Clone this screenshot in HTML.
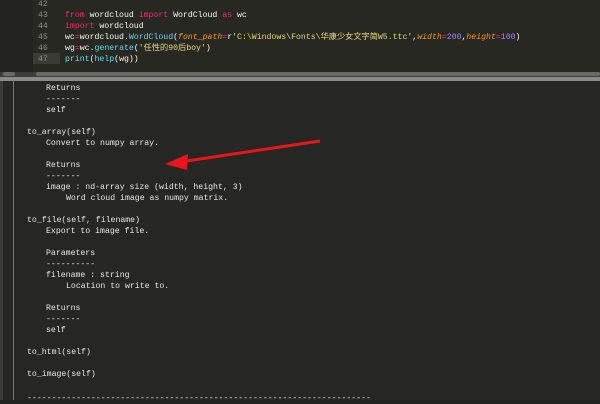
<!DOCTYPE html>
<html><head><meta charset="utf-8"><style>
body{margin:0;width:600px;height:400px;overflow:hidden;background:#232320;font-family:"Liberation Mono","Noto Sans CJK SC",monospace;font-size:8.2px;line-height:11px;position:relative}
.ed{position:absolute;left:0;top:0;width:600px;height:72px;background:#272822}
.gut{position:absolute;left:0;top:0;width:33px;height:72px;background:#22231f}
.ln{position:absolute;left:38px;color:#8f908a;width:20px;height:11px}
.cd{position:absolute;left:65px;color:#f8f8f2;white-space:pre;height:11px;line-height:11px}
.k{color:#f92672}.f{color:#66d9ef}.s{color:#e6db74}.a{color:#fd971f;font-style:italic}.n{color:#ae81ff}
.cd span{line-height:11px}
.out{position:absolute;left:0;top:81px;width:600px;height:319px;background:#262624}
.o{position:absolute;color:#e8e8e8;white-space:pre;height:11px}
</style></head><body>
<div class="ed"><div class="gut"></div>
<div style="position:absolute;left:33px;top:53px;width:27px;height:11px;background:#3a3b35"></div>
<div class="ln" style="top:-1px">42</div>
<div class="ln" style="top:10px">43</div><div class="cd" style="top:10px"><span class="k">from</span> wordcloud <span class="k">import</span> WordCloud <span class="k">as</span> wc</div>
<div class="ln" style="top:21px">44</div><div class="cd" style="top:21px"><span class="k">import</span> wordcloud</div>
<div class="ln" style="top:32px">45</div><div class="cd" style="top:32px">wc<span class="k">=</span>wordcloud.<span class="f">WordCloud</span>(<span class="a">font_path</span><span class="k">=</span>r<span class="s">'C:\Windows\Fonts\华康少女文字简W5.ttc'</span>,<span class="a">width</span><span class="k">=</span><span class="n">200</span>,<span class="a">height</span><span class="k">=</span><span class="n">100</span>)</div>
<div class="ln" style="top:43px">46</div><div class="cd" style="top:43px">wg<span class="k">=</span>wc.<span class="f">generate</span>(<span class="s">'任性的90后boy'</span>)</div>
<div class="ln" style="top:54px">47</div><div class="cd" style="top:54px"><span class="f">print</span>(<span class="f">help</span>(wg))</div>
</div>
<div style="position:absolute;left:0;top:72px;width:600px;height:5px;background:#3c3c38"></div>
<div style="position:absolute;left:3px;top:72px;width:12px;height:4px;background:#6a6a66;border-radius:2px"></div>
<div style="position:absolute;left:36px;top:72px;width:564px;height:4px;background:#6a6a66;border-radius:2px"></div>
<div style="position:absolute;left:0;top:77px;width:600px;height:4px;background:#8a8a86"></div>
<div class="out">
<div style="position:absolute;left:0;top:0;width:3px;height:319px;background:#3a3a38"></div>
<div style="position:absolute;left:13px;top:0;width:1px;height:319px;background:#777"></div>
</div>
<div class="o" style="left:46px;top:83px">Returns</div>
<div class="o" style="left:46px;top:94px">-------</div>
<div class="o" style="left:46px;top:105px">self</div>
<div class="o" style="left:27px;top:127px">to_array(self)</div>
<div class="o" style="left:46px;top:138px">Convert to numpy array.</div>
<div class="o" style="left:46px;top:160px">Returns</div>
<div class="o" style="left:46px;top:171px">-------</div>
<div class="o" style="left:46px;top:182px">image : nd-array size (width, height, 3)</div>
<div class="o" style="left:66px;top:193px">Word cloud image as numpy matrix.</div>
<div class="o" style="left:27px;top:215px">to_file(self, filename)</div>
<div class="o" style="left:46px;top:226px">Export to image file.</div>
<div class="o" style="left:46px;top:248px">Parameters</div>
<div class="o" style="left:46px;top:259px">----------</div>
<div class="o" style="left:46px;top:270px">filename : string</div>
<div class="o" style="left:66px;top:281px">Location to write to.</div>
<div class="o" style="left:46px;top:303px">Returns</div>
<div class="o" style="left:46px;top:314px">-------</div>
<div class="o" style="left:46px;top:325px">self</div>
<div class="o" style="left:27px;top:347px">to_html(self)</div>
<div class="o" style="left:27px;top:369px">to_image(self)</div>
<div class="o" style="left:27px;top:393px">----------------------------------------------------------------------</div>
<svg style="position:absolute;left:0;top:0" width="600" height="400">
<line x1="320" y1="141" x2="180" y2="162" stroke="#e8161a" stroke-width="3"/>
<polygon points="165,164 188,154 187,170" fill="#e8161a"/>
</svg>
</body></html>
